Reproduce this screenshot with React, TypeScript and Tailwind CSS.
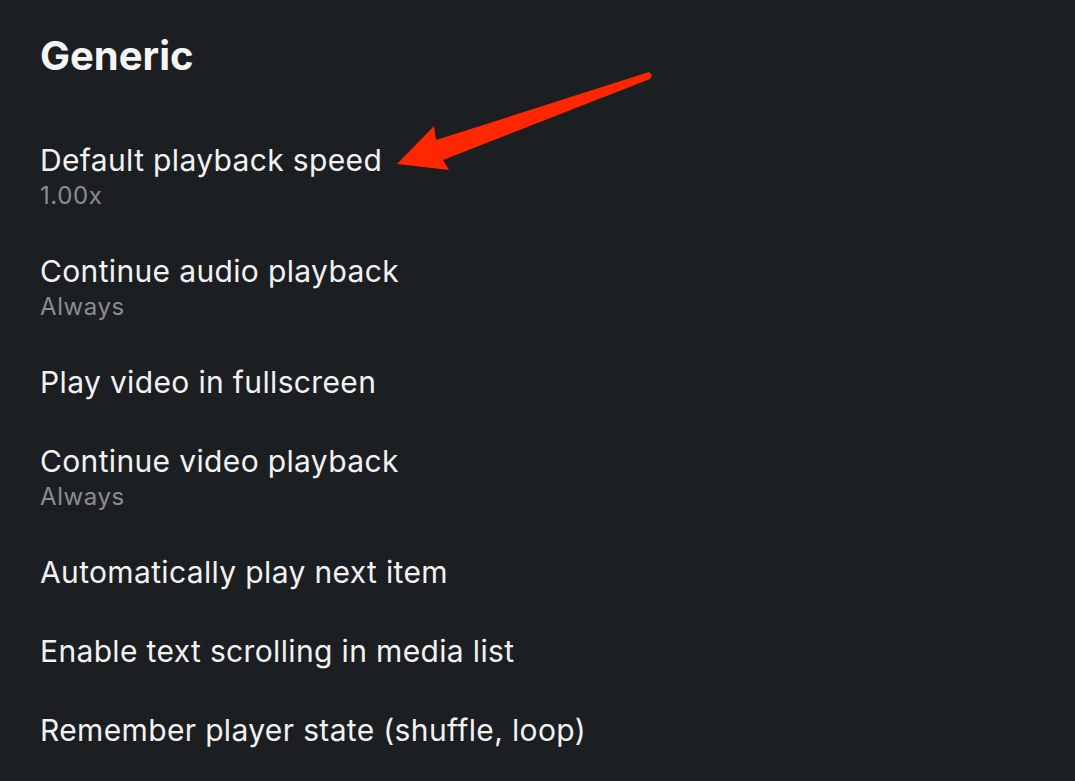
const items = [
  { title: "Default playback speed", value: "1.00x" },
  { title: "Continue audio playback", value: "Always" },
  { title: "Play video in fullscreen" },
  { title: "Continue video playback", value: "Always" },
  { title: "Automatically play next item" },
  { title: "Enable text scrolling in media list" },
  { title: "Remember player state (shuffle, loop)" },
];

export default function App() {
  return (
    <div className="relative min-h-[781px] w-full overflow-hidden bg-[#1c1f22] font-['Inter',sans-serif] antialiased">
      <div className="px-[40px] pt-[32px]">
        {/* Section header */}
        <h1 className="text-[40px] leading-[48px] font-bold text-[#f5f5f5]">Generic</h1>

        <div className="mt-[41px] flex flex-col">
          {items.map((item, i) => (
            <div key={i} className={item.value ? "flex flex-col py-[21px]" : "flex flex-col pt-[21px] pb-[22px]"}>
              <span className="text-[30px] leading-[36px] tracking-[0.35px] text-[#f2f2f2]">{item.title}</span>
              {item.value && (
                <span className="mt-[3px] text-[24px] leading-[30px] tracking-[0.6px] text-[#8a8d91]">{item.value}</span>
              )}
            </div>
          ))}
        </div>
      </div>

      {/* Annotation arrow */}
      <svg
        className="pointer-events-none absolute left-0 top-0"
        width="1075"
        height="781"
        viewBox="0 0 1075 781"
      >
        <polygon
          fill="#ff2600"
          points="397,164 434,126 436,140 649,72 652,75 650,79 443,160 449,170"
        />
      </svg>
    </div>
  );
}
